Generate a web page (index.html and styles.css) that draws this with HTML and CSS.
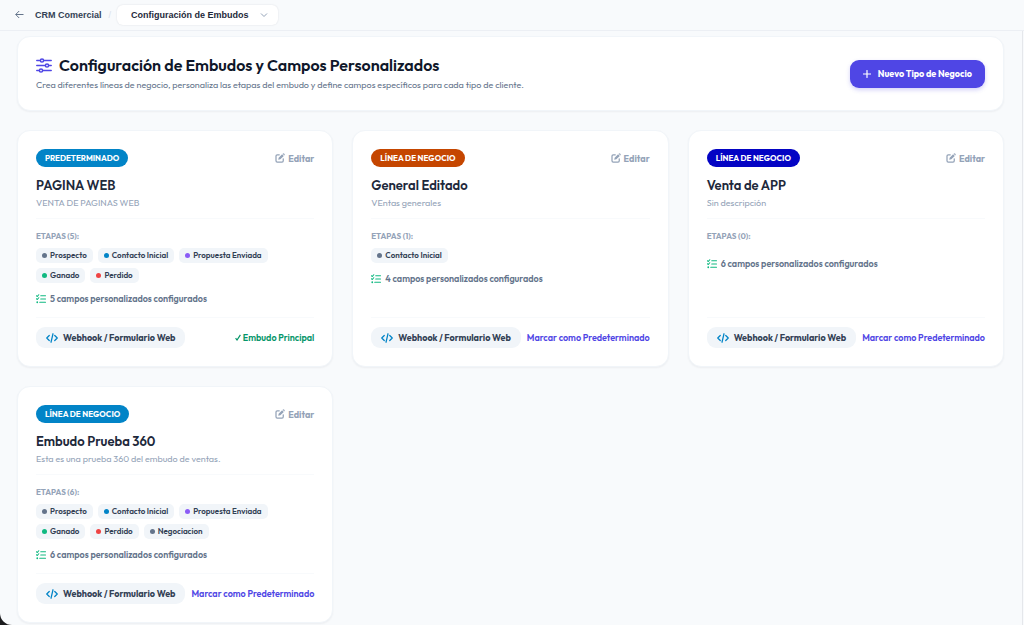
FILE: index.html
```
<!DOCTYPE html>
<html lang="es">
<head>
    <meta charset="UTF-8">
    <meta name="viewport" content="width=device-width, initial-scale=1.0">
    <title>Configuración de Embudos</title>
    <link rel="stylesheet" href="styles.css">
</head>
<body>
    <!-- shared icons -->
    <svg class="sprite" width="0" height="0" aria-hidden="true">
        <symbol id="i-edit" viewBox="0 0 20 20"><path d="M8.500 3.500H4.500Q2 3.500 2 6V15.500Q2 18 4.500 18H14Q16.500 18 16.500 15.500V11.500" fill="none" stroke="currentColor" stroke-width="2.500" stroke-linecap="round"/><path d="M14.200 2.400 17.600 5.800 10.700 12.700 6.500 13.500 7.300 9.300ZM15.200 1.400Q16.900 0 18.600 1.400T18.600 4.800Z" fill="currentColor"/></symbol>
        <symbol id="i-list" viewBox="0 0 20 20"><path d="M1 3.500 2.700 5 5.500 1.500M1 9.500 2.700 11 5.500 7.500M9.500 3.500H19M9.500 10H19M7.500 16.500H19" fill="none" stroke="currentColor" stroke-width="2.200" stroke-linecap="round" stroke-linejoin="round"/><circle cx="2.500" cy="16.500" r="1.800" fill="currentColor"/></symbol>
        <symbol id="i-code" viewBox="0 0 24 20"><path d="M6.500 5 1.500 10 6.500 15M17.500 5 22.500 10 17.500 15M14 1.500 10 18.500" fill="none" stroke="currentColor" stroke-width="2.500" stroke-linecap="round" stroke-linejoin="round"/></symbol>
    </svg>

    <div class="app">
        <header class="topbar">
            <button class="back" aria-label="Volver">
                <svg width="9" height="9" viewBox="0 0 9 9"><path d="M8.500 4.500H.8M4.200 1 .7 4.500 4.200 8" fill="none" stroke="currentColor" stroke-width="1"/></svg>
            </button>
            <a class="crumb" href="#">CRM Comercial</a>
            <span class="slash">/</span>
            <div class="view-select">
                <select aria-label="Vista">
                    <option>Configuración de Embudos</option>
                </select>
                <svg width="8" height="6" viewBox="0 0 8 6"><path d="M1 1.500 4 4.500 7 1.500" fill="none" stroke="currentColor"/></svg>
            </div>
        </header>

        <main class="content">
            <section class="hero">
                <div>
                    <h1>
                        <svg width="16" height="16" viewBox="0 0 16 16" fill="none" stroke="currentColor" stroke-width="1.500" stroke-linecap="round"><path d="M.8 2.500H4M8 2.500H15.200M.8 7.500H9M13 7.500H15.200M.8 12.500H3M7 12.500H15.200"/><circle cx="6" cy="2.500" r="1.600"/><circle cx="11" cy="7.500" r="1.600"/><circle cx="5" cy="12.500" r="1.600"/></svg>
                        Configuración de Embudos y Campos Personalizados
                    </h1>
                    <p>Crea diferentes líneas de negocio, personaliza las etapas del embudo y define campos específicos para cada tipo de cliente.</p>
                </div>
                <button class="btn-new">
                    <svg width="8" height="8" viewBox="0 0 8 8"><path d="M4 .5V7.500M.5 4H7.500" stroke="currentColor" stroke-width="1.200" stroke-linecap="round"/></svg>
                    Nuevo Tipo de Negocio
                </button>
            </section>

            <div class="cards">
                <article class="card">
                    <div class="card-top">
                        <span class="badge sky">PREDETERMINADO</span>
                        <button class="edit"><svg><use href="#i-edit"/></svg>Editar</button>
                    </div>
                    <h2>PAGINA WEB</h2>
                    <p class="desc">VENTA DE PAGINAS WEB</p>
                    <h3>ETAPAS (5):</h3>
                    <ul class="stages">
                        <li class="gray">Prospecto</li>
                        <li class="blue">Contacto Inicial</li>
                        <li class="violet">Propuesta Enviada</li>
                        <li class="green">Ganado</li>
                        <li class="red">Perdido</li>
                    </ul>
                    <p class="fields"><svg><use href="#i-list"/></svg>5 campos personalizados configurados</p>
                    <div class="card-foot">
                        <button class="webhook"><svg><use href="#i-code"/></svg>Webhook / Formulario Web</button>
                        <span class="main-tag"><svg width="6" height="7" viewBox="0 0 6 7"><path d="M.6 4.200 2 6 5.400 .8" fill="none" stroke="currentColor" stroke-width="1.200"/></svg>Embudo Principal</span>
                    </div>
                </article>

                <article class="card">
                    <div class="card-top">
                        <span class="badge orange">LÍNEA DE NEGOCIO</span>
                        <button class="edit"><svg><use href="#i-edit"/></svg>Editar</button>
                    </div>
                    <h2>General Editado</h2>
                    <p class="desc">VEntas generales</p>
                    <h3>ETAPAS (1):</h3>
                    <ul class="stages">
                        <li class="gray">Contacto Inicial</li>
                    </ul>
                    <p class="fields"><svg><use href="#i-list"/></svg>4 campos personalizados configurados</p>
                    <div class="card-foot">
                        <button class="webhook"><svg><use href="#i-code"/></svg>Webhook / Formulario Web</button>
                        <button class="set-main">Marcar como Predeterminado</button>
                    </div>
                </article>

                <article class="card">
                    <div class="card-top">
                        <span class="badge navy">LÍNEA DE NEGOCIO</span>
                        <button class="edit"><svg><use href="#i-edit"/></svg>Editar</button>
                    </div>
                    <h2>Venta de APP</h2>
                    <p class="desc">Sin descripción</p>
                    <h3>ETAPAS (0):</h3>
                    <ul class="stages"></ul>
                    <p class="fields"><svg><use href="#i-list"/></svg>6 campos personalizados configurados</p>
                    <div class="card-foot">
                        <button class="webhook"><svg><use href="#i-code"/></svg>Webhook / Formulario Web</button>
                        <button class="set-main">Marcar como Predeterminado</button>
                    </div>
                </article>

                <article class="card">
                    <div class="card-top">
                        <span class="badge sky">LÍNEA DE NEGOCIO</span>
                        <button class="edit"><svg><use href="#i-edit"/></svg>Editar</button>
                    </div>
                    <h2>Embudo Prueba 360</h2>
                    <p class="desc">Esta es una prueba 360 del embudo de ventas.</p>
                    <h3>ETAPAS (6):</h3>
                    <ul class="stages">
                        <li class="gray">Prospecto</li>
                        <li class="blue">Contacto Inicial</li>
                        <li class="violet">Propuesta Enviada</li>
                        <li class="green">Ganado</li>
                        <li class="red">Perdido</li>
                        <li class="gray">Negociacion</li>
                    </ul>
                    <p class="fields"><svg><use href="#i-list"/></svg>6 campos personalizados configurados</p>
                    <div class="card-foot">
                        <button class="webhook"><svg><use href="#i-code"/></svg>Webhook / Formulario Web</button>
                        <button class="set-main">Marcar como Predeterminado</button>
                    </div>
                </article>
            </div>
        </main>
    </div>
</body>
</html>
```
FILE: styles.css
```
* {
    box-sizing: border-box;
}

body {
    margin: 0;
    background: #1c1c1e;
    font-family: Outfit, Lato, sans-serif;
    color: #1e293b;
}

h1, h2, h3, p, ul {
    margin: 0;
    padding: 0;
}

button {
    border: 0;
    padding: 0;
    background: none;
    font-family: inherit;
    white-space: nowrap;
    cursor: pointer;
}

svg {
    flex: none;
}

.sprite {
    position: absolute;
}

.app {
    height: 100vh;
    display: flex;
    flex-direction: column;
    background: #f8fafc;
    border-bottom-left-radius: 12px;
    overflow: hidden;
}

/* top bar */
.topbar {
    flex: none;
    display: flex;
    align-items: center;
    height: 31px;
    padding: 0 15px 1px;
    border-bottom: 1px solid #eceff4;
    font-family: "Liberation Sans", Arial, sans-serif;
    font-size: 9px;
    font-weight: bold;
}

.back {
    display: flex;
    margin-right: 11px;
    color: #64748b;
}

.crumb {
    color: #334155;
    text-decoration: none;
}

.slash {
    margin: 0 6px 0 7px;
    color: #dbe1ea;
    font-weight: normal;
}

.view-select {
    position: relative;
    color: #94a3b8;
}

.view-select select {
    appearance: none;
    display: block;
    height: 20px;
    padding: 0 29px 0 14px;
    border: 0;
    border-radius: 6px;
    background: #fff;
    box-shadow: 0 0 2px rgba(15, 23, 42, 0.12);
    color: #1e293b;
    font: inherit;
}

.view-select svg {
    position: absolute;
    right: 10px;
    top: 7px;
    pointer-events: none;
}

/* page */
.content {
    flex: 1;
    margin-right: 1px;
    padding: 5px 18px 0 17px;
    border-right: 1px solid #e5e7eb;
    overflow-y: auto;
    scrollbar-width: none;
}

.hero,
.card {
    background: #fff;
    border: 1px solid #f1f5f9;
    border-radius: 13px;
    box-shadow: 0 1px 2px rgba(15, 23, 42, 0.05);
}

.hero {
    display: flex;
    align-items: center;
    justify-content: space-between;
    padding: 18px;
    margin-bottom: 19px;
}

.hero h1 {
    display: flex;
    align-items: center;
    gap: 7px;
    line-height: 21px;
    font-size: 16px;
    font-weight: 600;
    color: #0f172a;
}

.hero h1 svg {
    color: #4f46e5;
}

.hero p {
    margin-top: 2px;
    font-size: 9px;
    line-height: 14px;
    color: #64748b;
}

.btn-new {
    display: flex;
    align-items: center;
    gap: 7px;
    height: 28px;
    padding: 0 13px;
    border-radius: 9px;
    background: #4f46e5;
    box-shadow: 0 2px 4px rgba(79, 70, 229, 0.25);
    color: #fff;
    font-size: 9px;
    font-weight: 700;
}

.cards {
    display: grid;
    grid-template-columns: repeat(3, 1fr);
    gap: 19px;
    padding-bottom: 19px;
}

.card {
    display: flex;
    flex-direction: column;
    padding: 18px;
}

.card-top,
.card-foot {
    display: flex;
    align-items: center;
    justify-content: space-between;
}

.badge {
    padding: 0 9px;
    border-radius: 9px;
    color: #fff;
    font-size: 8px;
    font-weight: 700;
    line-height: 18px;
}

.sky { background: #0284c7; }
.orange { background: #c54600; }
.navy { background: #0404c4; }

.edit {
    display: flex;
    align-items: center;
    gap: 3px;
    color: #94a3b8;
    font-size: 9px;
    font-weight: 700;
}

.edit svg {
    width: 10px;
    height: 10px;
}

.card h2 {
    margin-top: 9px;
    font-size: 13px;
    line-height: 18px;
    font-weight: 600;
}

.desc {
    margin-top: 2px;
    padding-bottom: 8px;
    border-bottom: 1px solid #f8fafc;
    font-size: 9px;
    line-height: 14px;
    color: #94a3b8;
}

.card h3 {
    margin: 11px 0 6px;
    font-size: 8px;
    line-height: 12px;
    font-weight: 700;
    color: #94a3b8;
}

.stages {
    display: flex;
    flex-wrap: wrap;
    gap: 5px;
    list-style: none;
}

.stages li {
    display: flex;
    align-items: center;
    gap: 3px;
    padding: 0 6px;
    border-radius: 5px;
    background: #f1f5f9;
    color: #334155;
    font-size: 8px;
    line-height: 15px;
    font-weight: 600;
}

.stages li::before {
    content: "";
    width: 5px;
    height: 5px;
    border-radius: 50%;
}

.stages .gray::before { background: #64748b; }
.stages .blue::before { background: #0284c7; }
.stages .violet::before { background: #8b5cf6; }
.stages .green::before { background: #10b981; }
.stages .red::before { background: #ef4444; }

.fields {
    display: flex;
    align-items: center;
    gap: 4px;
    margin: 9px 0 11px;
    font-size: 9px;
    line-height: 14px;
    font-weight: 600;
    color: #64748b;
}

.fields svg {
    width: 10px;
    height: 10px;
    color: #10b981;
}

.card-foot {
    margin-top: auto;
    padding-top: 9px;
    border-top: 1px solid #f8fafc;
}

.webhook {
    display: flex;
    align-items: center;
    gap: 5px;
    height: 21px;
    padding: 0 10px;
    border-radius: 9px;
    background: #f1f5f9;
    color: #334155;
    font-size: 9px;
    font-weight: 700;
}

.webhook svg {
    width: 12px;
    height: 10px;
    color: #0284c7;
}

.main-tag {
    display: flex;
    align-items: center;
    gap: 2px;
    color: #059669;
    font-size: 9px;
    font-weight: 600;
}

.set-main {
    color: #4f46e5;
    font-size: 9px;
    font-weight: 600;
}
```
